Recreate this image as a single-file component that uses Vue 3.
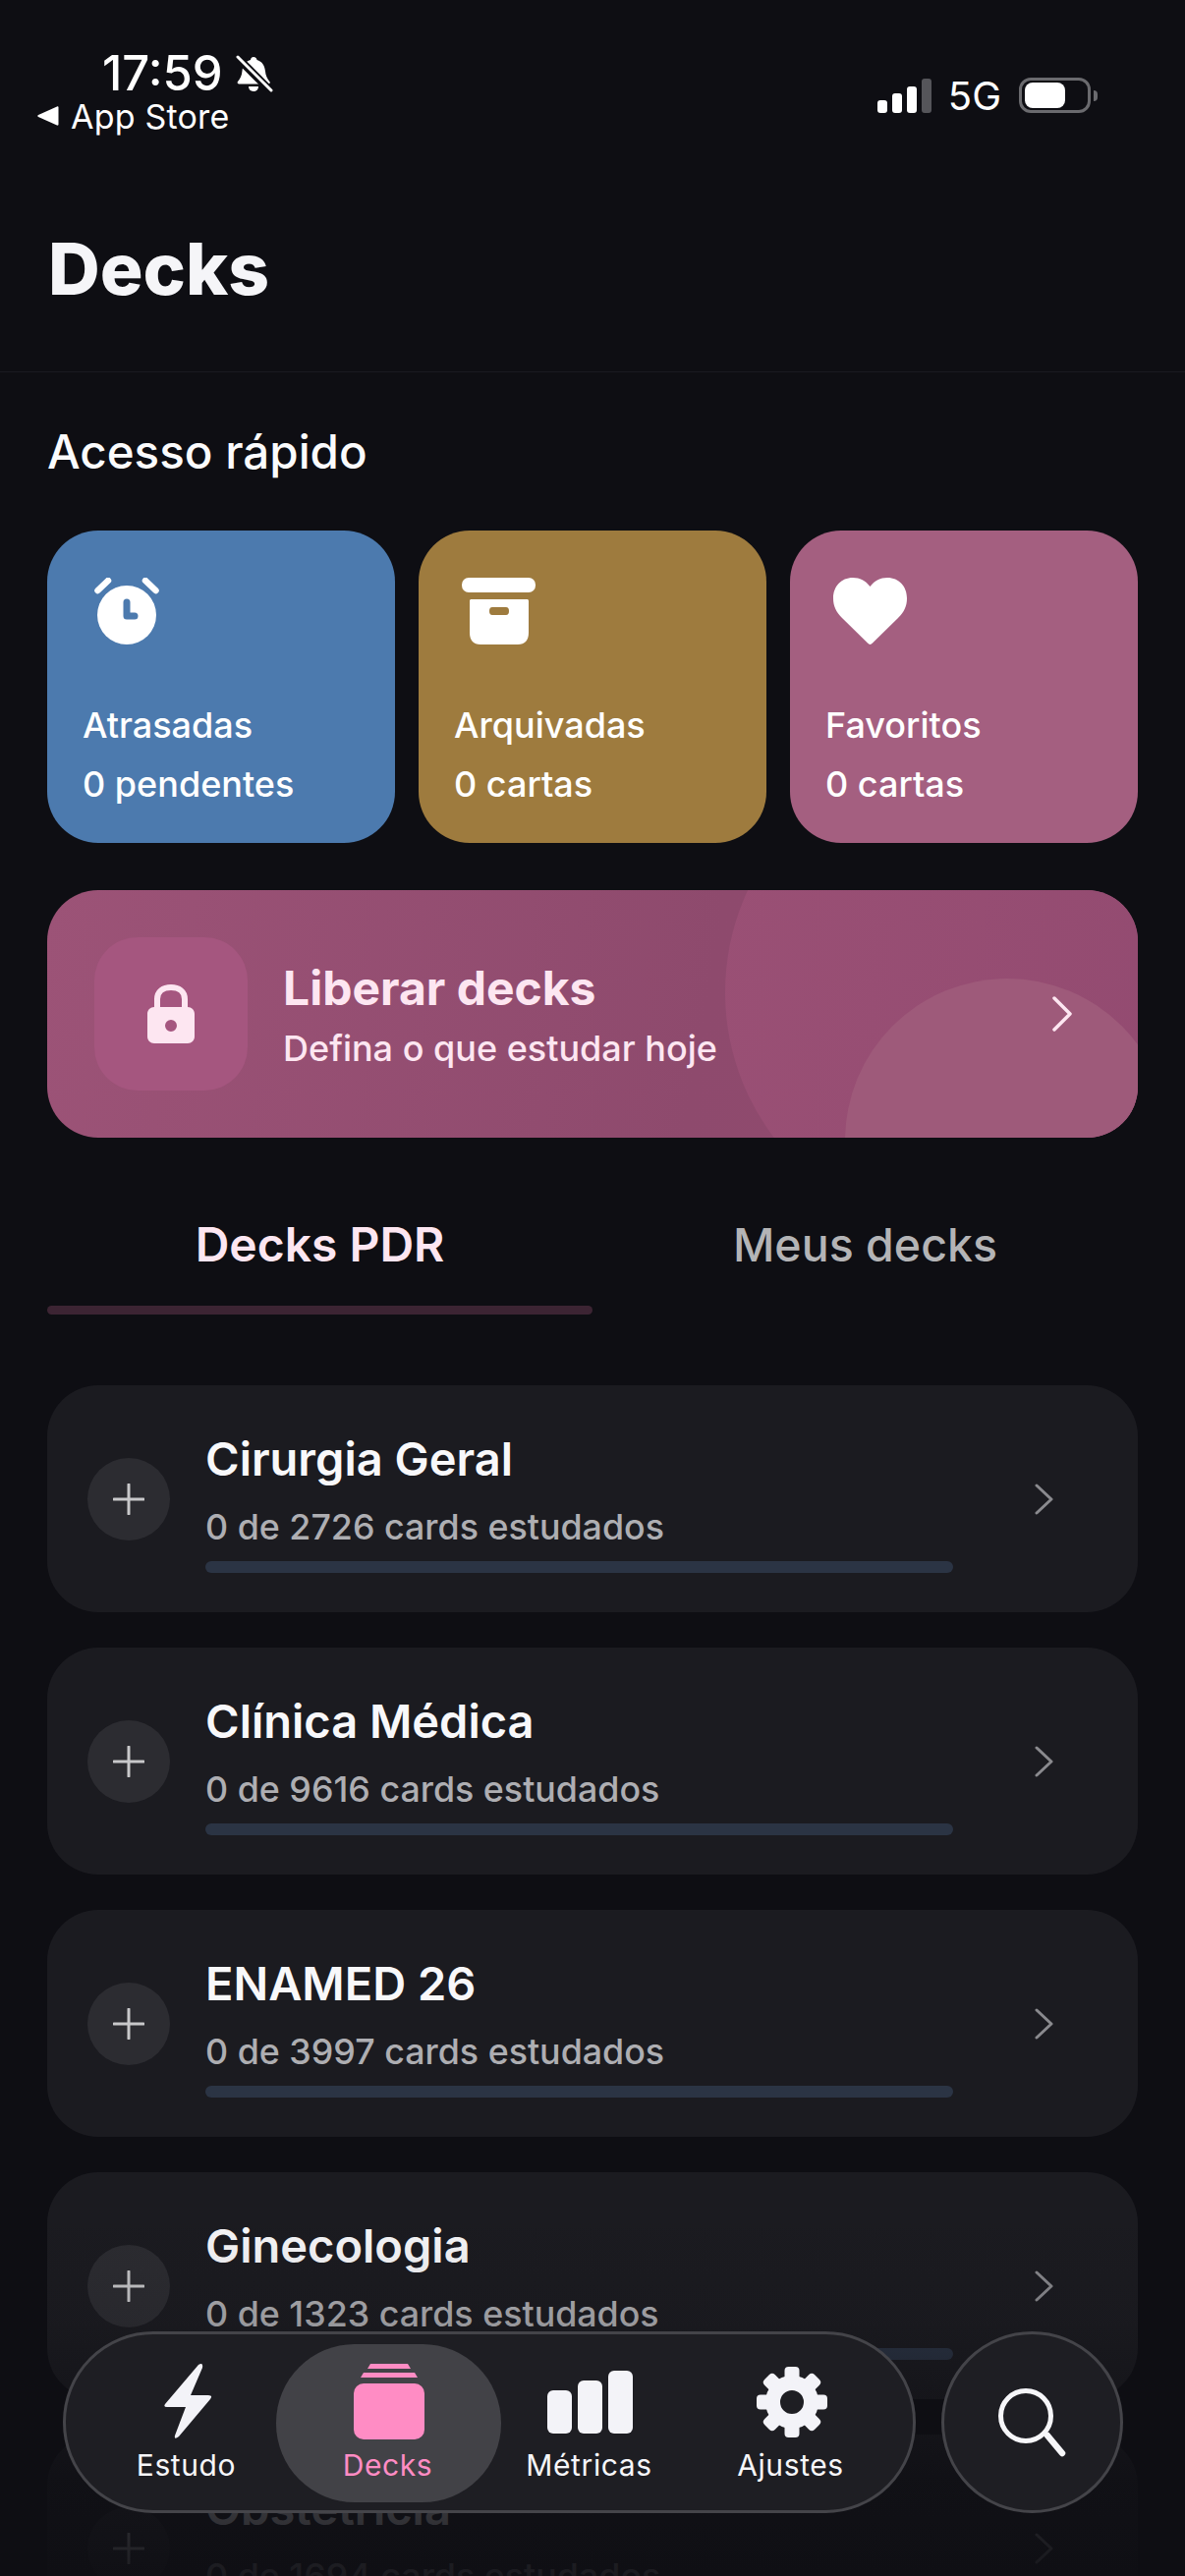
<script setup>
const quick = [
  { name: 'Atrasadas', sub: '0 pendentes', icon: 'alarm', color: '#4c7aae' },
  { name: 'Arquivadas', sub: '0 cartas', icon: 'archive', color: '#9e7b3e' },
  { name: 'Favoritos', sub: '0 cartas', icon: 'heart', color: '#a45f80' },
]

const decks = [
  { name: 'Cirurgia Geral', total: 2726 },
  { name: 'Clínica Médica', total: 9616 },
  { name: 'ENAMED 26', total: 3997 },
  { name: 'Ginecologia', total: 1323 },
  { name: 'Obstetrícia', total: 1694 },
]

const tabs = [
  { label: 'Estudo', icon: 'bolt' },
  { label: 'Decks', icon: 'deck', active: true },
  { label: 'Métricas', icon: 'bars' },
  { label: 'Ajustes', icon: 'gear' },
]

const teeth = [0, 45, 90, 135, 180, 225, 270, 315]
</script>

<template>
  <div class="page">
    <header class="header">
      <div class="status">
        <div class="status-left">
          <div class="time-row">
            <span class="time">17:59</span>
            <svg class="bell" width="38" height="38" viewBox="0 0 38 38">
              <path fill="#fff" d="M18 2c-2 0-3 1.500-3 3-6 1.500-8 6-8.500 11-.4 5-2 8-4.500 11-.8 1-.3 2.500 1.200 2.500h30c1.500 0 2-1.500 1.200-2.500-2.500-3-4-6-4.500-11-.5-5-3-9.500-8.400-11 0-1.500-1.400-3-3.500-3z"/>
              <path fill="#fff" d="M13 32h10c0 3-2.200 5-5 5s-5-2-5-5z"/>
              <path stroke="#0e0e13" stroke-width="8" d="M3 4l32 32"/>
              <path stroke="#fff" stroke-width="3" stroke-linecap="round" d="M2 2l34 34"/>
            </svg>
          </div>
          <div class="back-row">
            <svg width="22" height="20" viewBox="0 0 22 20"><path fill="#fff" d="M20 0.500c1 -.4 1.500 0 1.500 1v17c0 1-.5 1.400-1.500 1L1 11c-1-.5-1-1.500 0-2z"/></svg>
            <span>App Store</span>
          </div>
        </div>
        <div class="status-right">
          <div class="signal">
            <i style="height: 13px"></i>
            <i style="height: 20px"></i>
            <i style="height: 27px"></i>
            <i class="off" style="height: 35px"></i>
          </div>
          <span class="net">5G</span>
          <div class="battery"><div class="battery-fill"></div></div>
          <div class="battery-tip"></div>
        </div>
      </div>
      <h1>Decks</h1>
    </header>

    <main class="content">
      <h2>Acesso rápido</h2>
      <div class="quick">
        <div v-for="q in quick" :key="q.name" class="quick-card" :style="{ background: q.color }">
          <div class="quick-icon">
            <svg v-if="q.icon == 'alarm'" width="76" height="68" viewBox="-4 0 76 68">
              <circle cx="33" cy="38" r="30" fill="#fff"/>
              <path d="M33 25v14h8" fill="none" :stroke="q.color" stroke-width="7" stroke-linecap="round" stroke-linejoin="round"/>
              <path d="M3.500 13L14 3M62.500 13L52 3" stroke="#fff" stroke-width="6.500" stroke-linecap="round"/>
            </svg>
            <svg v-if="q.icon == 'archive'" width="76" height="68" viewBox="0 0 76 68">
              <rect x="0" y="0" width="75" height="15" rx="7" fill="#fff"/>
              <path fill="#fff" fill-rule="evenodd" d="M10 22h56c1.500 0 2 .5 2 2v32c0 8-4 12-11 12H19c-7 0-11-4-11-12V24c0-1.500.5-2 2-2zM31 30c-2 0-3 1.500-3 4s1 4 3 4h14c2 0 3-1.500 3-4s-1-4-3-4z"/>
            </svg>
            <svg v-if="q.icon == 'heart'" width="76" height="68" viewBox="0 0 76 68">
              <path fill="#fff" d="M37.500 9C33 3 27 0 20 0 8 0 0 9 0 21c0 8 3 14 9 20l26 25.500c1.500 1.900 3.500 1.900 5 0L66 41c6-6 9-12 9-20C75 9 67 0 55 0 48 0 42 3 37.500 9z"/>
            </svg>
          </div>
          <div class="quick-name">{{ q.name }}</div>
          <div class="quick-sub">{{ q.sub }}</div>
        </div>
      </div>

      <div class="banner">
        <div class="blob blob-big"></div>
        <div class="blob blob-small"></div>
        <div class="lock-box">
          <svg width="48" height="60" viewBox="0 0 48 60">
            <path d="M10 26V15C10 7 16 3 24 3s14 4 14 12v11" fill="none" stroke="#fde6f1" stroke-width="6"/>
            <path fill="#fde6f1" fill-rule="evenodd" d="M7 23h34c4 0 7 3 7 7v23c0 4-3 7-7 7H7c-4 0-7-3-7-7V30c0-4 3-7 7-7zM24 36a6 6 0 1 0 0 12 6 6 0 0 0 0-12z"/>
          </svg>
        </div>
        <div class="banner-text">
          <div class="banner-title">Liberar decks</div>
          <div class="banner-sub">Defina o que estudar hoje</div>
        </div>
        <svg class="banner-chev" width="22" height="36" viewBox="0 0 22 36">
          <path d="M3 2l16 16L3 34" fill="none" stroke="#fde6f1" stroke-width="3.500" stroke-linecap="round" stroke-linejoin="round"/>
        </svg>
      </div>

      <div class="tabs">
        <div class="tab active">Decks PDR</div>
        <div class="tab">Meus decks</div>
      </div>

      <div class="deck-list">
        <div v-for="d in decks" :key="d.name" class="deck">
          <div class="plus">
            <svg width="32" height="32" viewBox="0 0 32 32">
              <path d="M16 1v30M1 16h30" stroke="#c8c8ca" stroke-width="3" stroke-linecap="round"/>
            </svg>
          </div>
          <div class="deck-body">
            <div class="deck-name">{{ d.name }}</div>
            <div class="deck-sub">0 de {{ d.total }} cards estudados</div>
            <div class="deck-bar"></div>
          </div>
          <svg class="deck-chev" width="20" height="32" viewBox="0 0 20 32">
            <path d="M2 2l15 14L2 30" fill="none" stroke="#8a8a8e" stroke-width="3" stroke-linecap="round" stroke-linejoin="round"/>
          </svg>
        </div>
      </div>
    </main>

    <div class="scrim"></div>

    <nav class="tabbar">
      <div v-for="t in tabs" :key="t.label" class="tabbar-item" :class="{ on: t.active }">
        <svg v-if="t.icon == 'bolt'" class="tabbar-icon" width="72" height="78" viewBox="-12 0 72 78">
          <path fill="#f3f3f8" d="M35 1L1 41q-2 3 2 3h19L11 73q-1 5 4 1l32-38q3-4-2-4H27L39 4q1-6-4-3z"/>
        </svg>
        <svg v-if="t.icon == 'deck'" class="tabbar-icon" width="72" height="78" viewBox="0 0 72 78">
          <path fill="#ff8cc4" d="M17 0h38l3 5H14zM10 9h52l3 5H7z"/>
          <rect x="0" y="20" width="72" height="57" rx="10" fill="#ff8cc4"/>
        </svg>
        <svg v-if="t.icon == 'bars'" class="tabbar-icon" width="87" height="78" viewBox="0 0 87 78">
          <rect x="0" y="27" width="25" height="44" rx="6" fill="#f3f3f8"/>
          <rect x="31" y="17" width="25" height="54" rx="6" fill="#f3f3f8"/>
          <rect x="62" y="7" width="25" height="64" rx="6" fill="#f3f3f8"/>
        </svg>
        <svg v-if="t.icon == 'gear'" class="tabbar-icon" width="72" height="78" viewBox="-36 -39 72 78">
          <circle r="19.500" fill="none" stroke="#f3f3f8" stroke-width="15"/>
          <rect v-for="a in teeth" :key="a" x="-7.500" y="-36" width="15" height="15" rx="4" fill="#f3f3f8" :transform="'rotate(' + a + ')'"/>
        </svg>
        <span class="tabbar-label">{{ t.label }}</span>
      </div>
    </nav>

    <div class="search">
      <svg width="70" height="70" viewBox="0 0 70 70">
        <circle cx="28" cy="28" r="25.500" fill="none" stroke="#f6f6f9" stroke-width="5"/>
        <path d="M50 48l15 18" stroke="#f6f6f9" stroke-width="6.500" stroke-linecap="round"/>
      </svg>
    </div>
  </div>
</template>

<style scoped>
.page {
  position: relative;
  width: 1206px;
  height: 2622px;
  overflow: hidden;
  background: #0e0e13;
  color: #fff;
  font-family: Inter, "Liberation Sans", sans-serif;
}

.header {
  height: 378px;
  border-bottom: 1px solid #1a1a20;
}

.status {
  height: 232px;
  display: flex;
  justify-content: space-between;
  box-sizing: border-box;
}

.status-left {
  padding: 53px 0 0 38px;
}

.time-row {
  display: flex;
  align-items: center;
  padding-left: 66px;
  gap: 13px;
  height: 44px;
}

.time {
  font-size: 49px;
  font-weight: 500;
  line-height: 44px;
}

.back-row {
  display: flex;
  align-items: center;
  gap: 12px;
  margin-top: 3px;
  height: 36px;
  font-size: 34px;
  font-weight: 400;
  letter-spacing: 0.2px;
}

.status-right {
  display: flex;
  align-items: center;
  height: 36px;
  margin: 79px 89px 0 0;
}

.signal {
  display: flex;
  align-items: flex-end;
  gap: 5px;
  height: 36px;
}

.signal i {
  display: block;
  width: 10px;
  border-radius: 3px;
  background: #fff;
}

.signal i.off {
  background: #55555a;
}

.net {
  margin-left: 17px;
  font-size: 40px;
  font-weight: 400;
}

.battery {
  box-sizing: border-box;
  margin-left: 18px;
  width: 73px;
  height: 36px;
  border: 3px solid #6a6a6e;
  border-radius: 12px;
  padding: 2px 3px;
}

.battery-fill {
  width: 41px;
  height: 26px;
  background: #fff;
  border-radius: 8px;
}

.battery-tip {
  margin-left: 3px;
  width: 4px;
  height: 11px;
  background: #6a6a6e;
  border-radius: 0 4px 4px 0;
}

h1 {
  margin: 0;
  padding-left: 49px;
  font-size: 73px;
  line-height: 84px;
  font-weight: 800;
  color: #f5f5f8;
}

.content {
  padding: 0 48px;
}

h2 {
  margin: 0;
  padding-top: 54px;
  font-size: 47.500px;
  line-height: 54px;
  font-weight: 500;
  color: #fbfbfc;
}

.quick {
  margin-top: 53px;
  display: grid;
  grid-template-columns: repeat(3, 1fr);
  gap: 24px;
}

.quick-card {
  height: 318px;
  border-radius: 52px;
  box-sizing: border-box;
  padding: 48px 0 0 36px;
}

.quick-icon {
  height: 68px;
  margin-left: 8px;
  margin-bottom: 60px;
}

.quick-icon svg {
  display: block;
}

.quick-name,
.quick-sub {
  font-size: 36px;
  line-height: 44px;
  font-weight: 500;
  color: #fff;
}

.quick-sub {
  margin-top: 16px;
}

.banner {
  position: relative;
  overflow: hidden;
  margin-top: 48px;
  height: 252px;
  border-radius: 52px;
  display: flex;
  align-items: center;
  background: linear-gradient(100deg, #9c5377 0%, #8e4a6d 60%, #934a70 100%);
}

.blob {
  position: absolute;
  border-radius: 50%;
}

.blob-big {
  left: 690px;
  top: -141px;
  width: 490px;
  height: 490px;
  background: linear-gradient(100deg, #9a5075, #924a70);
}

.blob-small {
  left: 812px;
  top: 90px;
  width: 330px;
  height: 330px;
  background: #9e5a7a;
}

.lock-box {
  position: relative;
  margin-left: 48px;
  width: 156px;
  height: 156px;
  border-radius: 44px;
  background: #a5567f;
  display: flex;
  align-items: center;
  justify-content: center;
}

.banner-text {
  position: relative;
  margin-left: 36px;
  padding-top: 3px;
  color: #fde6f1;
}

.banner-title {
  font-size: 48px;
  line-height: 56px;
  font-weight: 700;
}

.banner-sub {
  margin-top: 11px;
  font-size: 36px;
  line-height: 44px;
  font-weight: 500;
}

.banner-chev {
  position: absolute;
  left: 1022px;
  top: 108px;
}

.tabs {
  display: flex;
  margin-top: 81px;
}

.tab {
  flex: 1;
  height: 99px;
  text-align: center;
  font-size: 46.500px;
  line-height: 56px;
  font-weight: 500;
  color: #b4b4b6;
}

.tab.active {
  font-size: 48px;
  font-weight: 600;
  color: #fde6f1;
  position: relative;
}

.tab.active::after {
  content: "";
  position: absolute;
  left: 0;
  right: 0;
  bottom: 0;
  height: 9px;
  border-radius: 5px;
  background: #3c2433;
}

.deck-list {
  margin-top: 72px;
  display: flex;
  flex-direction: column;
  gap: 36px;
}

.deck {
  flex: none;
  display: flex;
  height: 231px;
  box-sizing: border-box;
  padding-left: 41px;
  border-radius: 52px;
  background: #1b1b20;
}

.plus {
  align-self: center;
  flex: none;
  width: 84px;
  height: 84px;
  border-radius: 50%;
  background: #2c2c31;
  display: flex;
  align-items: center;
  justify-content: center;
}

.deck-body {
  width: 761px;
  margin-left: 36px;
  padding-top: 47px;
}

.deck-name {
  font-size: 47px;
  line-height: 56px;
  font-weight: 600;
  color: #f8f8fa;
}

.deck-sub {
  margin-top: 19px;
  font-size: 35.800px;
  line-height: 44px;
  font-weight: 500;
  color: #aeaeb2;
}

.deck-bar {
  margin-top: 13px;
  height: 12px;
  border-radius: 6px;
  background: #2b3444;
}

.deck-chev {
  align-self: center;
  margin-left: 83px;
}

.scrim {
  position: absolute;
  left: 0;
  right: 0;
  top: 2250px;
  bottom: 0;
  background: linear-gradient(180deg, rgba(14, 14, 19, 0) 0%, rgba(14, 14, 19, 0.12) 30%, rgba(14, 14, 19, 0.8) 75%, rgba(14, 14, 19, 0.92) 100%);
}

.tabbar {
  position: absolute;
  left: 64px;
  top: 2373px;
  box-sizing: border-box;
  width: 868px;
  height: 185px;
  padding: 0 21px;
  display: flex;
  border: 3px solid #444449;
  border-radius: 92px;
  background: #1e1e23;
}

.tabbar-item {
  position: relative;
  flex: 1;
  display: flex;
  flex-direction: column;
  align-items: center;
  padding-top: 30px;
}

.tabbar-item.on::before {
  content: "";
  position: absolute;
  left: -12px;
  right: -12px;
  top: 10px;
  bottom: 8px;
  border-radius: 80px;
  background: #424247;
}

.tabbar-icon {
  position: relative;
  display: block;
  height: 78px;
}

.tabbar-label {
  position: relative;
  margin-top: 7px;
  margin-right: 2px;
  font-size: 30px;
  line-height: 36px;
  letter-spacing: 0.6px;
  color: #f6f6f9;
}

.tabbar-item.on .tabbar-label {
  color: #ff8cc4;
}

.search {
  position: absolute;
  left: 958px;
  top: 2373px;
  box-sizing: border-box;
  width: 185px;
  height: 185px;
  border: 3px solid #444449;
  border-radius: 50%;
  background: #1e1e23;
  display: flex;
  align-items: center;
  justify-content: center;
}
</style>
